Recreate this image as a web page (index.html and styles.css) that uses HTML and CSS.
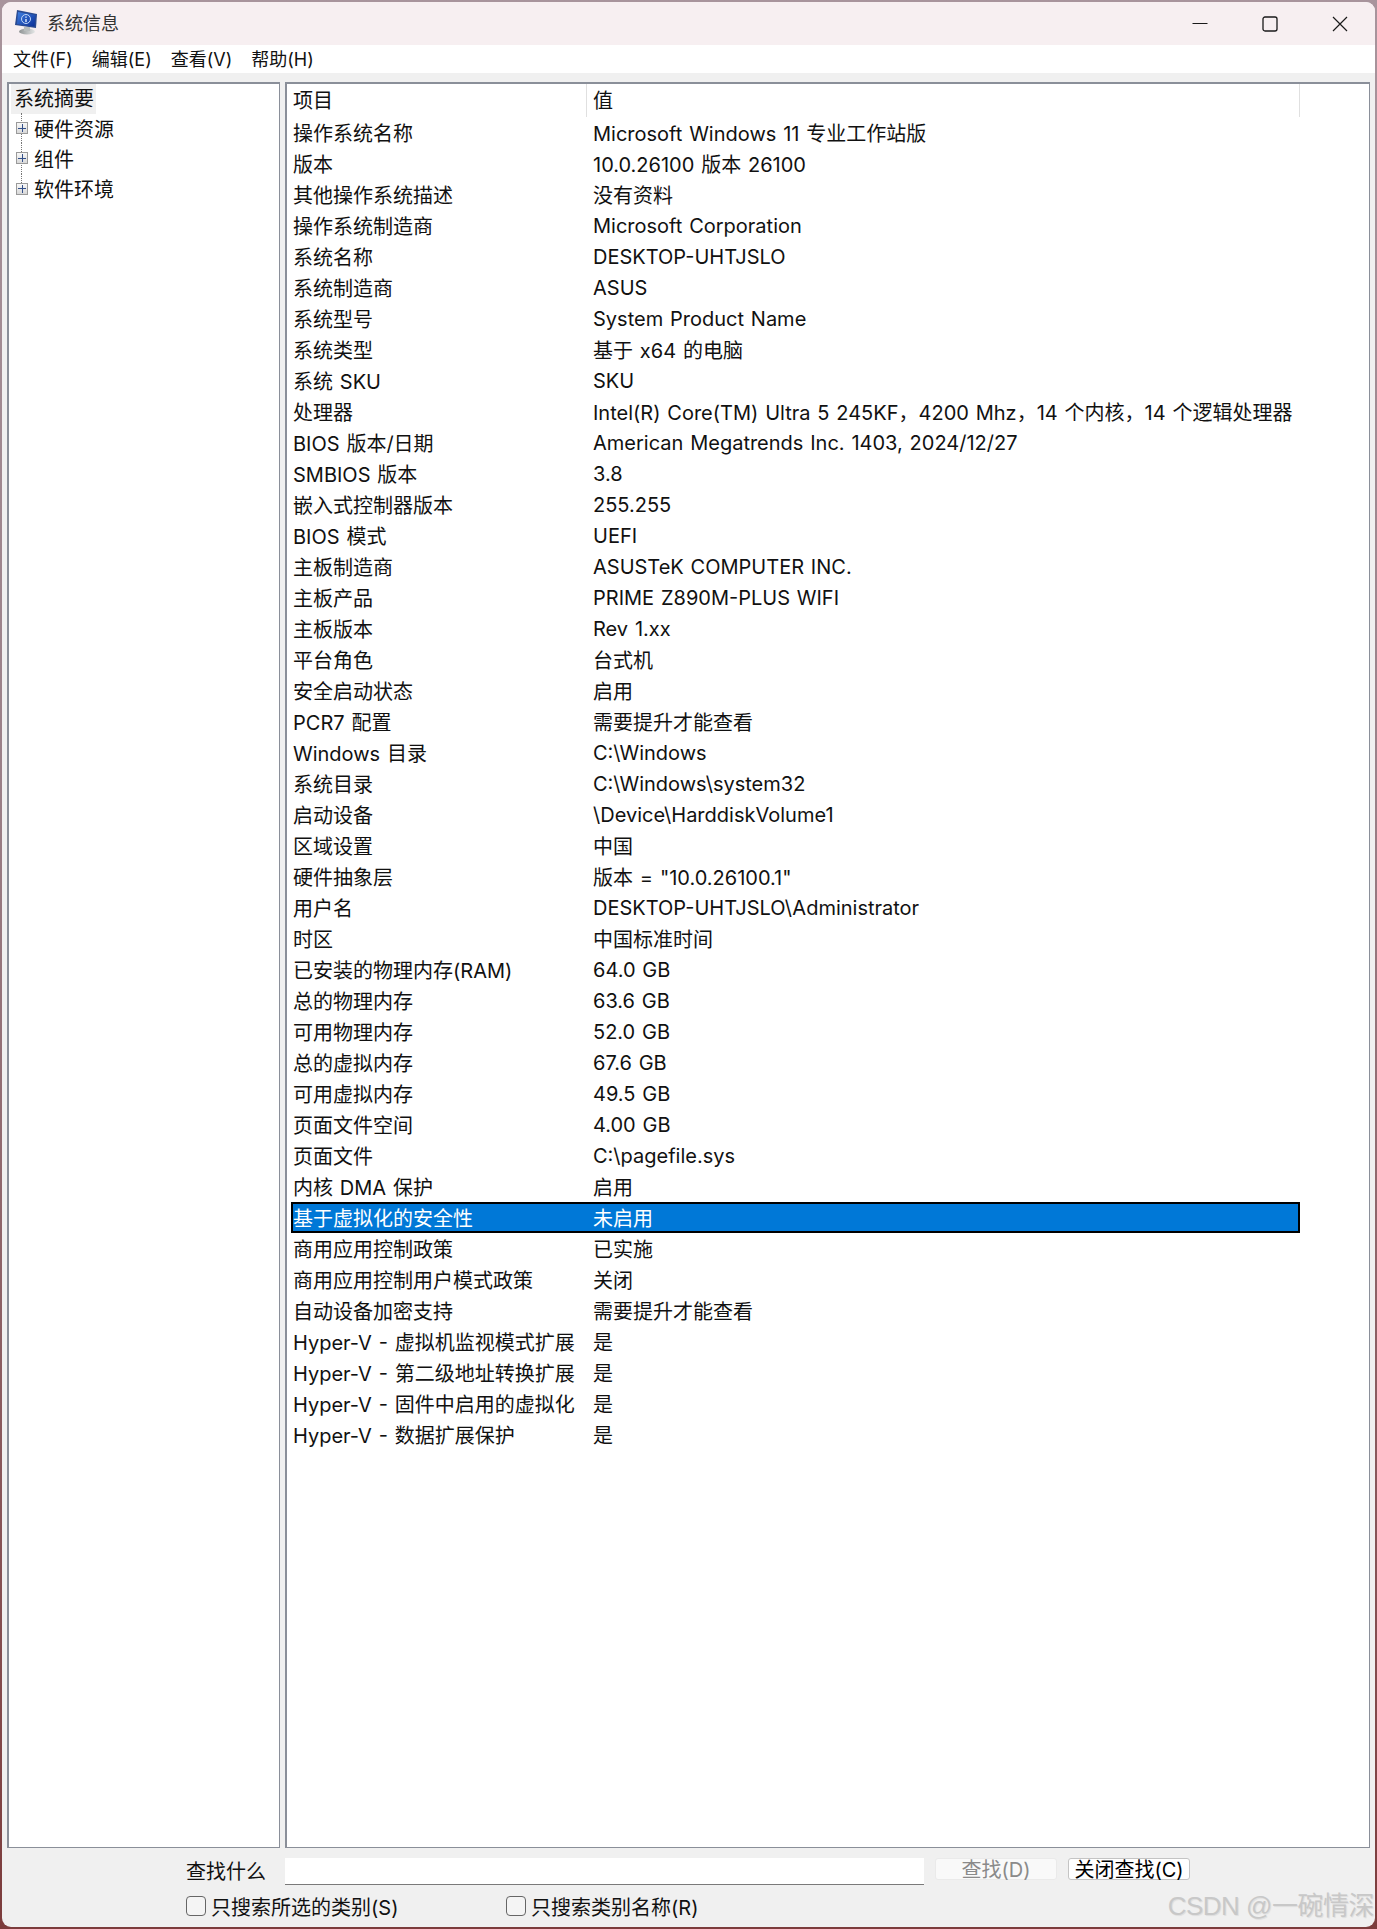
FILE: index.html
```html
<!DOCTYPE html>
<html lang="zh-CN">
<head>
<meta charset="utf-8">
<title>系统信息</title>
<link rel="stylesheet" href="styles.css">
</head>
<body>
<div class="window">
  <header class="titlebar">
    <svg class="app-icon" viewBox="0 0 24 26" width="24" height="26">
      <defs>
        <linearGradient id="scr" x1="0" y1="0" x2="1" y2="1"><stop offset="0" stop-color="#3f7fe0"/><stop offset="1" stop-color="#0c2f98"/></linearGradient>
        <linearGradient id="bs" x1="0" y1="0" x2="1" y2="0"><stop offset="0" stop-color="#8f9394"/><stop offset="1" stop-color="#e4e6e6"/></linearGradient>
      </defs>
      <path d="M3 1 L23 5 L22 19 L1 16 Z" fill="#2a4a90"/>
      <path d="M4 3 L21.500 6 L20.500 17.500 L3 15 Z" fill="url(#scr)"/>
      <circle cx="12" cy="10" r="4.500" fill="none" stroke="#c4d8f8" stroke-width="1"/>
      <path d="M12 7.500v1.300M12 10v3" stroke="#e6f0ff" stroke-width="1.400"/>
      <ellipse cx="13" cy="22.500" rx="8" ry="3" fill="url(#bs)"/>
      <rect x="10" y="18" width="6" height="4" fill="#b8bcbc"/>
    </svg>
    <span class="title-text">系统信息</span>
    <div class="caption">
      <button class="cap-btn"><svg viewBox="0 0 16 16" width="16" height="16"><path d="M0.500 7.500h15" stroke="#1a1a1a" stroke-width="1.100" fill="none"/></svg></button>
      <button class="cap-btn"><svg viewBox="0 0 16 16" width="16" height="16"><rect x="1" y="1" width="14" height="14" rx="2" stroke="#1a1a1a" stroke-width="1.300" fill="none"/></svg></button>
      <button class="cap-btn"><svg viewBox="0 0 16 16" width="16" height="16"><path d="M1 1 L15 15 M15 1 L1 15" stroke="#1a1a1a" stroke-width="1.200" fill="none"/></svg></button>
    </div>
  </header>
  <nav class="menubar">
    <span class="menu-item">文件(F)</span>
    <span class="menu-item">编辑(E)</span>
    <span class="menu-item">查看(V)</span>
    <span class="menu-item">帮助(H)</span>
  </nav>
  <main class="panes">
    <aside class="pane tree">
      <div class="tree-root"><span class="tree-selected">系统摘要</span></div>
      <div class="tree-node"><span class="plus"></span><span>硬件资源</span></div>
      <div class="tree-node"><span class="plus"></span><span>组件</span></div>
      <div class="tree-node tree-last"><span class="plus"></span><span>软件环境</span></div>
    </aside>
    <section class="pane list">
      <div class="list-head"><div class="head-cell head-first">项目</div><div class="head-cell head-second">值</div></div>
      <div class="row"><span>操作系统名称</span><span>Microsoft Windows 11 专业工作站版</span></div>
      <div class="row"><span>版本</span><span>10.0.26100 版本 26100</span></div>
      <div class="row"><span>其他操作系统描述</span><span>没有资料</span></div>
      <div class="row"><span>操作系统制造商</span><span>Microsoft Corporation</span></div>
      <div class="row"><span>系统名称</span><span>DESKTOP-UHTJSLO</span></div>
      <div class="row"><span>系统制造商</span><span>ASUS</span></div>
      <div class="row"><span>系统型号</span><span>System Product Name</span></div>
      <div class="row"><span>系统类型</span><span>基于 x64 的电脑</span></div>
      <div class="row"><span>系统 SKU</span><span>SKU</span></div>
      <div class="row"><span>处理器</span><span>Intel(R) Core(TM) Ultra 5 245KF，4200 Mhz，14 个内核，14 个逻辑处理器</span></div>
      <div class="row"><span>BIOS 版本/日期</span><span>American Megatrends Inc. 1403, 2024/12/27</span></div>
      <div class="row"><span>SMBIOS 版本</span><span>3.8</span></div>
      <div class="row"><span>嵌入式控制器版本</span><span>255.255</span></div>
      <div class="row"><span>BIOS 模式</span><span>UEFI</span></div>
      <div class="row"><span>主板制造商</span><span>ASUSTeK COMPUTER INC.</span></div>
      <div class="row"><span>主板产品</span><span>PRIME Z890M-PLUS WIFI</span></div>
      <div class="row"><span>主板版本</span><span>Rev 1.xx</span></div>
      <div class="row"><span>平台角色</span><span>台式机</span></div>
      <div class="row"><span>安全启动状态</span><span>启用</span></div>
      <div class="row"><span>PCR7 配置</span><span>需要提升才能查看</span></div>
      <div class="row"><span>Windows 目录</span><span>C:\Windows</span></div>
      <div class="row"><span>系统目录</span><span>C:\Windows\system32</span></div>
      <div class="row"><span>启动设备</span><span>\Device\HarddiskVolume1</span></div>
      <div class="row"><span>区域设置</span><span>中国</span></div>
      <div class="row"><span>硬件抽象层</span><span>版本 = "10.0.26100.1"</span></div>
      <div class="row"><span>用户名</span><span>DESKTOP-UHTJSLO\Administrator</span></div>
      <div class="row"><span>时区</span><span>中国标准时间</span></div>
      <div class="row"><span>已安装的物理内存(RAM)</span><span>64.0 GB</span></div>
      <div class="row"><span>总的物理内存</span><span>63.6 GB</span></div>
      <div class="row"><span>可用物理内存</span><span>52.0 GB</span></div>
      <div class="row"><span>总的虚拟内存</span><span>67.6 GB</span></div>
      <div class="row"><span>可用虚拟内存</span><span>49.5 GB</span></div>
      <div class="row"><span>页面文件空间</span><span>4.00 GB</span></div>
      <div class="row"><span>页面文件</span><span>C:\pagefile.sys</span></div>
      <div class="row"><span>内核 DMA 保护</span><span>启用</span></div>
      <div class="row row-selected"><span>基于虚拟化的安全性</span><span>未启用</span></div>
      <div class="row"><span>商用应用控制政策</span><span>已实施</span></div>
      <div class="row"><span>商用应用控制用户模式政策</span><span>关闭</span></div>
      <div class="row"><span>自动设备加密支持</span><span>需要提升才能查看</span></div>
      <div class="row"><span>Hyper-V - 虚拟机监视模式扩展</span><span>是</span></div>
      <div class="row"><span>Hyper-V - 第二级地址转换扩展</span><span>是</span></div>
      <div class="row"><span>Hyper-V - 固件中启用的虚拟化</span><span>是</span></div>
      <div class="row"><span>Hyper-V - 数据扩展保护</span><span>是</span></div>
    </section>
  </main>
  <footer class="findbar">
    <div class="find-row">
      <label class="find-label">查找什么</label>
      <div class="find-input"></div>
      <div class="btn btn-disabled">查找(D)</div>
      <div class="btn btn-active">关闭查找(C)</div>
    </div>
    <div class="check-row">
      <div class="check check-first"><span class="box"></span><span>只搜索所选的类别(S)</span></div>
      <div class="check"><span class="box"></span><span>只搜索类别名称(R)</span></div>
    </div>
    <div class="watermark">CSDN @一碗情深</div>
  </footer>
</div>
</body>
</html>
```
FILE: styles.css
```css
* { box-sizing: border-box; }
html, body { margin: 0; padding: 0; }
body {
  width: 1377px;
  height: 1929px;
  padding: 2px;
  overflow: hidden;
  background: linear-gradient(180deg, #a8949c 0%, #9a8088 40%, #7c3c3c 100%);
  font-family: "Inter", "Noto Sans CJK SC", sans-serif;
  font-size: 20px;
  color: #111;
}
.window {
  position: relative;
  width: 1373px;
  height: 1925px;
  background: #f0f0f0;
  border-radius: 9px;
  overflow: hidden;
  display: flex;
  flex-direction: column;
}
.titlebar {
  height: 43px;
  flex: none;
  background: #f7eff1;
  display: flex;
  align-items: center;
  padding-left: 12px;
  padding-bottom: 3px;
}
.app-icon { flex: none; }
.title-text { margin-left: 9px; font-size: 18px; color: #333; }
.caption { margin-left: auto; display: flex; margin-top: 3px; }
.cap-btn {
  width: 70px;
  height: 43px;
  padding: 0;
  border: 0;
  background: transparent;
  display: flex;
  align-items: center;
  justify-content: center;
}
.menubar {
  height: 28px;
  flex: none;
  background: #fff;
  display: flex;
  align-items: center;
  padding: 0 0 2px 11px;
  font-size: 18px;
  gap: 19px;
}
.panes {
  margin-top: 9px;
  height: 1766px;
  flex: none;
  padding: 0 5px;
  display: flex;
  gap: 5px;
}
.pane {
  background: #fff;
  border: 2px solid #8a8f99;
  border-right-width: 1.5px;
  border-bottom-width: 1.5px;
  height: 100%;
}
.tree { width: 273px; flex: none; padding: 0 3px; }
.tree-root { height: 30px; line-height: 30px; margin-left: -1px; margin-bottom: -1px; }
.tree-selected { display: inline-block; height: 30px; width: 85px; padding-left: 3px; background: #f0f0f0; }
.tree-node {
  position: relative;
  height: 30.300px;
  display: flex;
  align-items: center;
  padding-left: 4px;
}
.tree-node::before {
  content: "";
  position: absolute;
  left: 9px;
  top: 0;
  height: 100%;
  border-left: 1px dotted #777;
}
.tree-last::before { height: 50%; }
.plus {
  position: relative;
  width: 12px;
  height: 12px;
  margin-right: 6px;
  border: 1px solid #9a9a9a;
  background:
    linear-gradient(#33508a, #33508a) center / 8px 1px no-repeat,
    linear-gradient(#33508a, #33508a) center / 1px 8px no-repeat,
    linear-gradient(180deg, #f8f8f8, #d8d8d8);
  flex: none;
}
.list { flex: 1; padding: 0 0 0 4px; }
.list-head { height: 33px; width: 1009px; display: flex; }
.head-cell { height: 100%; line-height: 35px; border-right: 1px solid #e0e0e0; padding-left: 2px; }
.head-first { width: 296px; }
.head-second { flex: 1; padding-left: 6px; }
.row {
  width: 1009px;
  height: 31px;
  display: grid;
  grid-template-columns: 302px 1fr;
  align-items: center;
  padding-left: 2px;
  white-space: nowrap;
  word-spacing: 1.200px;
}
.row span:last-child { padding-left: 0; margin-left: -2px; }
.row-selected {
  background: #0078d7;
  box-shadow: inset 0 0 0 2px #000;
  color: #fff;
}
.findbar { position: relative; flex: 1; padding-left: 184px; padding-top: 10px; }
.find-row { display: flex; align-items: flex-start; height: 27px; }
.find-label { width: 99px; line-height: 29px; }
.find-input { width: 639px; height: 27px; background: #fff; border-bottom: 1px solid #7a7a7a; }
.btn {
  height: 22px;
  margin-left: 11px;
  width: 122px;
  border-radius: 3px;
  text-align: center;
  line-height: 23px;
  font-size: 20px;
}
.btn-disabled { background: #f9f9f9; border: 1px solid #eaeaea; color: #8a8a8a; }
.btn-active { background: #fff; border: 1px solid #c4c4c4; color: #000; }
.check-row { display: flex; margin-top: 11px; }
.check { display: flex; align-items: center; gap: 5px; height: 20px; }
.check-first { width: 320px; }
.box { width: 20px; height: 20px; border: 1.500px solid #666; border-radius: 4px; background: #f4f4f4; flex: none; }
.watermark {
  position: absolute;
  right: 1px;
  top: 45px;
  font-family: "Liberation Sans", "Noto Sans CJK SC", sans-serif;
  font-size: 26px;
  letter-spacing: -0.5px;
  line-height: 26px;
  color: #c8c8c8;
  text-shadow: 1px 1px 1px rgba(0, 0, 0, 0.08);
  white-space: nowrap;
}
```
